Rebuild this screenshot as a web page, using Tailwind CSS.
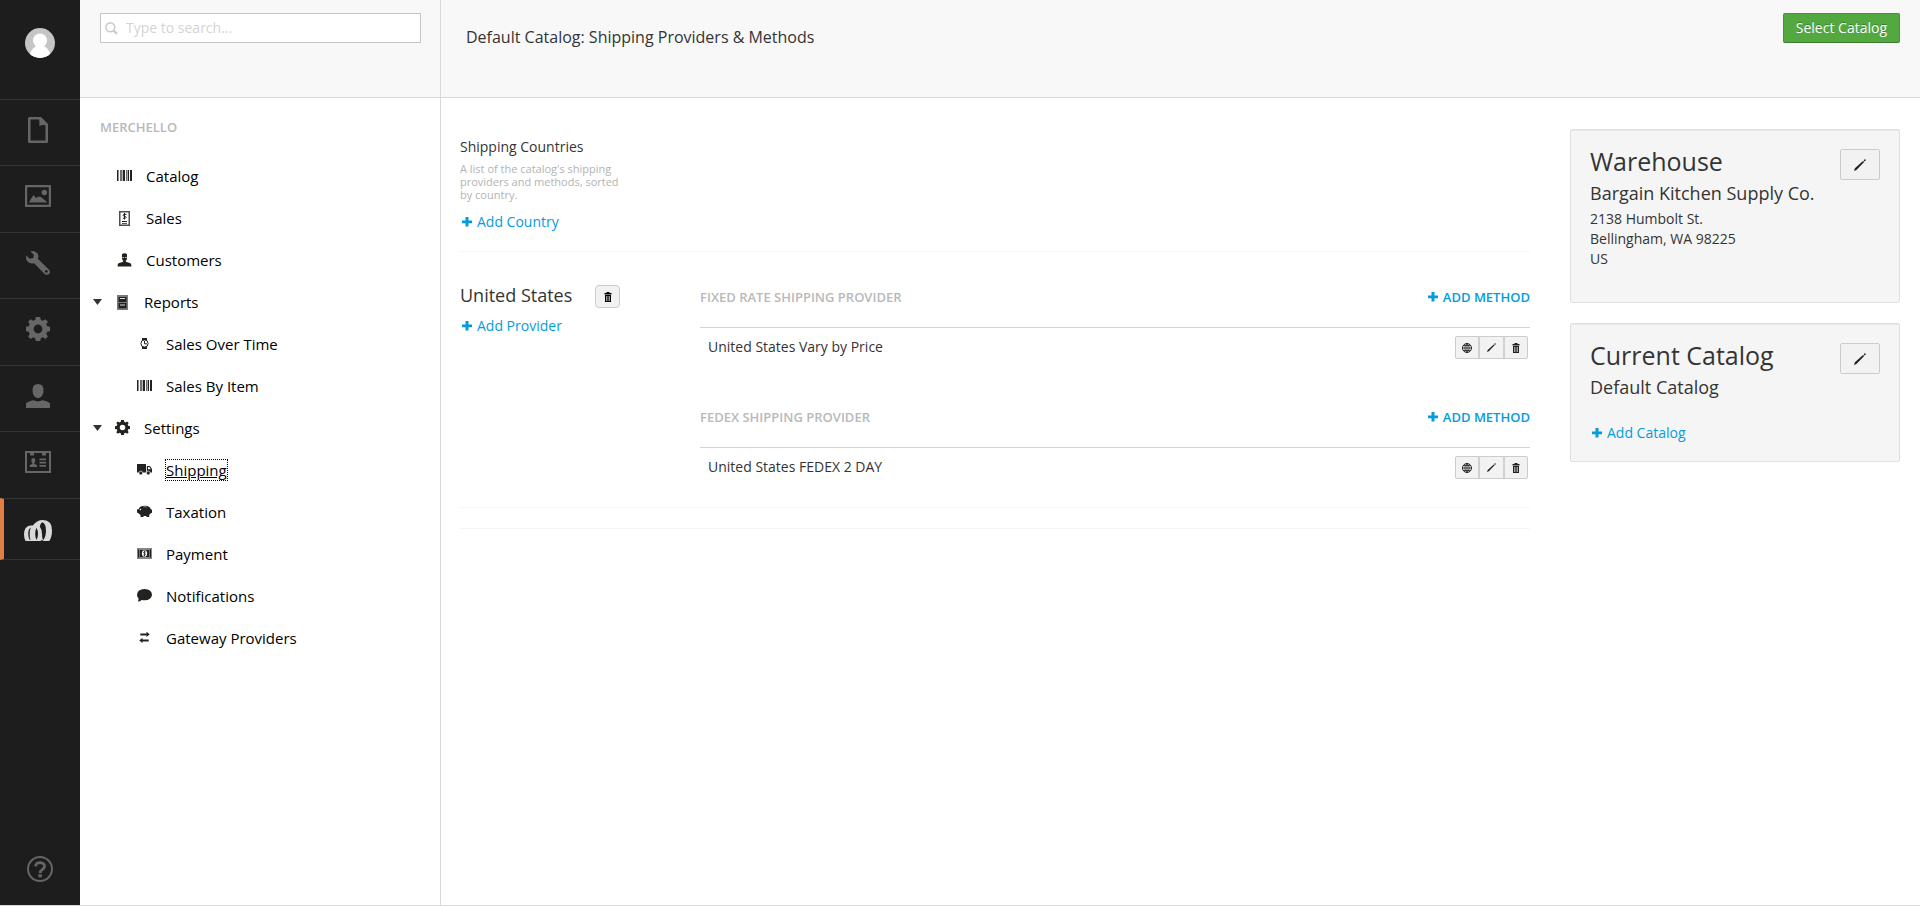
<!DOCTYPE html>
<html lang="en">
<head>
<meta charset="utf-8">
<title>Shipping Providers &amp; Methods</title>
<meta name="viewport" content="width=device-width, initial-scale=1">
<script src="https://cdn.jsdelivr.net/npm/@tailwindcss/browser@4"></script>
</head>
<body class="bg-white font-['Open_Sans',sans-serif] text-sm leading-5 text-[#343434]">

<!-- Shared icon symbols -->
<svg class="hidden" aria-hidden="true">
  <symbol id="plus" viewBox="0 0 10 11"><path d="M3.500 0h3v3.500H10v2.700H6.500V9.500h-3V6.200H0V3.500h3.500z"/></symbol>
  <symbol id="trash" viewBox="0 0 10 10"><path d="M3.5 1V0h3v1H8.500v1.500h-7V1z"/><path fill-rule="evenodd" d="M2 3h6v7H2zM3.300 4v5h.6V4zM4.700 4v5h.6V4zM6.100 4v5h.6V4z"/></symbol>
  <symbol id="pencil" viewBox="0 0 12 12"><path d="M0 12l.9-2.800L9 1.900l1.200 1.200L2.400 10.900zM9.600 1.300l.9-.9q.6-.2 1 .2t.2 1l-.9.900z"/></symbol>
  <symbol id="globe" viewBox="0 0 10 10"><circle cx="5" cy="5" r="4.500" fill="none" stroke="currentColor" stroke-width="1"/><path d="M5 .5v9M.5 5h9M1.400 2.500h7.200M1.400 7.500h7.200M5 .5q-4.500 4.500 0 9M5 .5q4.500 4.500 0 9" fill="none" stroke="currentColor" stroke-width=".8"/></symbol>
  <symbol id="barcode" viewBox="0 0 15 12"><path d="M0 0h1.500v11H0zM6 0h2v11H6zM11 0h1v11h-1zM13 0h2v11h-2z"/><path d="M3 0h2.500v11H3zM9 0h1.600v11H9z" opacity=".65"/></symbol>
  <symbol id="gear" viewBox="0 0 24 24"><path fill-rule="evenodd" d="M9.800 0h4.400l.6 2.900 2.100.9L19.400 2.200l2.500 2.500-1.600 2.500.8 2.100 2.900.5v4.400l-2.900.6-.8 2.100 1.600 2.500-2.500 2.500-2.500-1.600-2.100.9-.6 2.900H9.800l-.6-2.900-2.100-.9-2.500 1.600-2.500-2.500 1.600-2.500-.8-2.100L0 14.200V9.800l2.900-.5.8-2.100L2.100 4.700l2.500-2.500 2.500 1.600 2.100-.9zM12 7.600a4.400 4.400 0 1 0 0 8.800 4.400 4.400 0 0 0 0-8.800z"/></symbol>
</svg>

<div class="flex h-screen border-b border-[#d9d9d9]">

  <!-- Section bar -->
  <nav aria-label="Sections" class="flex w-20 shrink-0 flex-col bg-[#1d1d1d] text-[#666]">
    <a href="#" aria-label="Account" class="flex h-[99px] shrink-0 justify-center pt-7">
      <svg width="30" height="30" viewBox="0 0 30 30"><defs><clipPath id="face"><circle cx="15" cy="15" r="15"/></clipPath></defs><g clip-path="url(#face)"><rect width="30" height="30" fill="#c5c5c5"/><circle cx="15" cy="12.500" r="7" fill="#fff"/><path d="M4 27q4-8 7.500-9h7q4 1 7.500 9l-4 4H8z" fill="#fff"/></g></svg>
    </a>
    <ul class="flex shrink-0 flex-col">
      <li class="border-t border-[#343434] odd:h-[66px] even:h-[67px]"><a href="#" aria-label="Content" class="flex h-full items-center justify-center pr-1 pb-1.5">
        <svg width="20" height="26" viewBox="0 0 20 26" fill="currentColor"><path fill-rule="evenodd" d="M1.500 0H13l7 7v17.500Q20 26 18.500 26h-17Q0 26 0 24.500v-23Q0 0 1.500 0zM2.500 2.500v21h15V8.300q-3-.9-6.300.8.500-3.300 0-6.600z"/></svg></a></li>
      <li class="border-t border-[#343434] odd:h-[66px] even:h-[67px]"><a href="#" aria-label="Media" class="flex h-full items-center justify-center pr-1 pb-1.5">
        <svg width="26" height="22" viewBox="0 0 26 22" fill="currentColor"><path fill-rule="evenodd" d="M1 0h24q1 0 1 1v20q0 1-1 1H1q-1 0-1-1V1q0-1 1-1zM2.200 2.200v17.600h21.600V2.200z"/><circle cx="19.300" cy="7.500" r="2.700"/><path d="M4 17.500l2-3.800L8.500 10l2.500 3 2-1.200h2.500l3.500 2.700 3 2.500v.5z"/></svg></a></li>
      <li class="border-t border-[#343434] odd:h-[66px] even:h-[67px]"><a href="#" aria-label="Settings" class="flex h-full items-center justify-center pr-1 pb-1.5">
        <svg width="24" height="24" viewBox="0 0 24 24" fill="currentColor"><path fill-rule="evenodd" d="M4.500.3Q9-.8 11.500 2.600q1.500 2.600.3 5.200l10.800 10.400q2 2 1 4.200-2.200 2.600-5 .6L8.200 12.200Q4.400 13.200 1.800 10.800-.5 8.300.2 4.500l3.500 3.300 3.600-.7.600-3zM20.300 19a1.400 1.400 0 1 0 .01 0z"/></svg></a></li>
      <li class="border-t border-[#343434] odd:h-[66px] even:h-[67px]"><a href="#" aria-label="Developer" class="flex h-full items-center justify-center pr-1 pb-1.5">
        <svg width="24" height="24" fill="currentColor"><use href="#gear"/></svg></a></li>
      <li class="border-t border-[#343434] odd:h-[66px] even:h-[67px]"><a href="#" aria-label="Users" class="flex h-full items-center justify-center pr-1 pb-1.5">
        <svg width="24" height="24" viewBox="0 0 24 24" fill="currentColor"><path d="M12 0q5.500.2 5.500 6T14 13.600q-2 1-4 0Q6.500 11.800 6.500 6T12 0zM0 24v-4.500q.5-1.500 7.500-3.200 4.500 2.200 9 0 7 1.700 7.500 3.200V24z"/></svg></a></li>
      <li class="border-t border-[#343434] odd:h-[66px] even:h-[67px]"><a href="#" aria-label="Members" class="flex h-full items-center justify-center pr-1 pb-1.5">
        <svg width="26" height="22" viewBox="0 0 26 22" fill="currentColor"><path fill-rule="evenodd" d="M0 0h26v22H0zM2 2v18h22V2h-3v2.500h-4V2H9v2.500H5V2z"/><path d="M8.300 7q2 0 2 2.300t-1 2.700v.9l2.700 1V16H4.700v-2.100l2.600-1V12q-1-.6-1-2.700T8.300 7zM14.500 7.500H21v1.800h-6.500zM14.500 10.800H21v1.700h-6.500zM14.500 14H21v1.800h-6.500z"/></svg></a></li>
    </ul>
    <a href="#" aria-label="Merchello" aria-current="page" class="flex h-[62px] shrink-0 items-center justify-center border-y border-l-4 border-y-[#343434] border-l-[#e07f45] pt-0.5 pr-2 text-[#d9d9d9]">
      <svg width="28" height="21" viewBox="0 0 28 21" fill="currentColor"><path d="M1.500 21Q0 18 0 14.500 0 6.500 6 5.500q1.500-.2 2.800.1Q12.500 0 19 0q9 .3 9 10.500 0 6.500-2.700 10.500h-5.800q-.8-.3-1.500-1.500-.6 1-1.500 1.500z"/><path fill="#1d1d1d" d="M18.300 2.300Q22 3.500 22 10.500q0 6-2.600 9.500-1.600-1.800-1.400-6 0-4.500-2.200-7.500.7-3.400 2.500-4.200zM6.800 7.400Q4.200 9.300 4.200 13.500q0 4 1.600 6.500h.7q-1-2.700-.8-6 0-3.900 1.100-6.600zM12.500 7.800q1.500 2.600 1.500 6.200 0 3.500-1.500 6-1.300-2.500-1.300-6 0-3.600 1.300-6.200z"/></svg>
    </a>
    <a href="#" aria-label="Help" class="mt-auto flex justify-center pb-[23px]">
      <svg width="26" height="26" viewBox="0 0 26 26" fill="none" stroke="currentColor"><circle cx="13" cy="13" r="12" stroke-width="2"/><path d="M8.600 10.400Q8.800 6.600 13 6.600q4.600.2 4.500 3.600 0 1.800-2.300 3.400-2 1.400-2 3.400" stroke-width="2.800"/><path d="M11.300 18.300h3.600v3h-3.600z" fill="currentColor" stroke="none"/></svg>
    </a>
  </nav>

  <!-- Tree -->
  <div class="flex w-[361px] shrink-0 flex-col border-r border-[#d9d9d9]">
    <div class="h-[98px] border-b border-[#d9d9d9] bg-[#f8f8f8] px-5 pt-[13px]">
      <form role="search" class="mr-[-1px] flex h-[30px] items-center border border-[#c6c6c6] bg-white pl-1">
        <label for="search" class="mr-[7px] w-3.5 text-[#ccc]" aria-label="Search"><svg width="13" height="13" viewBox="0 0 13 13" fill="none" stroke="currentColor"><circle cx="5.300" cy="5.300" r="4.400" stroke-width="1.600"/><path d="M8.500 8.500l3.500 3.500" stroke-width="2.400"/></svg></label>
        <input id="search" type="search" placeholder="Type to search..." class="min-w-0 flex-1 bg-transparent text-sm outline-none placeholder:text-[#d4d4d4]">
      </form>
    </div>
    <nav aria-label="Merchello tree" class="pt-[19px] text-[15px] text-black">
      <h2 class="mb-[18px] pl-5 text-[13px] font-semibold text-[#b9b9b9]">MERCHELLO</h2>
      <ul class="fill-[#22221f]">
        <li class="flex h-[42px] items-center gap-3.5 pl-[37px]"><svg width="15" height="15" viewBox="0 0 15 15"><use href="#barcode" width="15" height="12" y="1"/></svg><a href="#">Catalog</a></li>
        <li class="flex h-[42px] items-center gap-3.5 pl-[37px]"><svg width="15" height="15" viewBox="0 0 15 15"><path fill-rule="evenodd" d="M2 0h11v15H2zM3.500 1.500v12h8v-12z" opacity=".8"/><path d="M9.400 3.500Q6 2.600 6 4.200q0 .8 1.500 1 1.700.3 1.600 1.300Q9 8 5.800 7.200M7.500 2v6.500" fill="none" stroke="#22221f"/><path d="M5 10h5v1H5zM5 12h5v.8H5z"/></svg><a href="#">Sales</a></li>
        <li class="flex h-[42px] items-center gap-3.5 pl-[37px]"><svg width="15" height="15" viewBox="0 0 15 15"><path d="M5 1q2.500-1.600 5 0v3.500q0 2.500-1.200 3.200v1l4.700 1.500q.8.500 1 3.300H.5q.2-2.800 1-3.300l4.700-1.500v-1Q5 7 5 4.500z"/><path d="M5.400 4h1.700v1H5.400zM8 4h1.700v1H8z" fill="#bbb"/></svg><a href="#">Customers</a></li>
        <li>
          <div class="flex h-[42px] items-center pl-[13px]"><button aria-label="Collapse Reports" aria-expanded="true" class="mr-[13px]"><svg width="9" height="6" viewBox="0 0 9 6" fill="#343434"><path d="M0 0h9L4.500 6z"/></svg></button><svg class="mr-3.5" width="15" height="15" viewBox="0 0 15 15"><path d="M2 0h11v15H2z" opacity=".6"/><path d="M3.500 2h8v5h-8zM3.500 8h8v5.200h-8z"/><path d="M5 3h5v1H5zM5 9.500h5v1H5z" fill="#ddd"/></svg><a href="#">Reports</a></div>
          <ul>
            <li class="flex h-[42px] items-center gap-3.5 pl-[57px]"><svg width="15" height="15" viewBox="0 0 15 15"><path d="M5 1h5v2.500H5zM5 9.500h5V12H5z"/><circle cx="7.500" cy="6.500" r="3.600" fill="#fff" stroke="#22221f" stroke-width="1"/><path d="M7.500 4v2.800H10" fill="none" stroke="#22221f"/></svg><a href="#">Sales Over Time</a></li>
            <li class="flex h-[42px] items-center gap-3.5 pl-[57px]"><svg width="15" height="15" viewBox="0 0 15 15"><use href="#barcode" width="15" height="12" y="1"/></svg><a href="#">Sales By Item</a></li>
          </ul>
        </li>
        <li>
          <div class="flex h-[42px] items-center pl-[13px]"><button aria-label="Collapse Settings" aria-expanded="true" class="mr-[13px]"><svg width="9" height="6" viewBox="0 0 9 6" fill="#343434"><path d="M0 0h9L4.500 6z"/></svg></button><svg class="mr-3.5" width="15" height="16" viewBox="0 0 15 16"><use href="#gear" width="15" height="15"/></svg><a href="#">Settings</a></div>
          <ul>
            <li class="flex h-[42px] items-center gap-3.5 pl-[57px]"><svg width="15" height="15" viewBox="0 0 15 15"><path d="M0 1h9v8.500H0z"/><path fill-rule="evenodd" d="M9.800 3H13l2 3v3.500H9.800zM11 4v2.300h2.700L12.500 4z"/><circle cx="3.800" cy="10" r="1.900" stroke="#fff" stroke-width=".6"/><circle cx="11.300" cy="10" r="1.900" stroke="#fff" stroke-width=".6"/></svg><a href="#" aria-current="page" class="underline outline outline-dotted outline-black">Shipping</a></li>
            <li class="flex h-[42px] items-center gap-3.5 pl-[57px]"><svg width="15" height="15" viewBox="0 0 15 15"><path d="M2 3.500Q3 .6 8 .7q5 0 5.800 3.500l1.200.5v3l-1.200.5-1.600 1.800V12H9.500v-1H6.500v1H3.500v-2L1.500 8.200 0 7.500v-3l1.500-.2z"/><path d="M6 1.700q2-.8 4 0v.6H6z" fill="#999"/><circle cx="3.400" cy="4.500" r=".7" fill="#fff"/></svg><a href="#">Taxation</a></li>
            <li class="flex h-[42px] items-center gap-3.5 pl-[57px]"><svg width="15" height="15" viewBox="0 0 15 15"><path d="M0 1h15v11H0z" opacity=".55"/><path d="M1 2.500h1.200v8H1zM3 3h9v7H3zM12.800 2.500H14v8h-1.200z"/><ellipse cx="7.500" cy="6.500" rx="2.600" ry="3.300" fill="#fff"/><path d="M8.800 5Q6.300 4.200 6.500 5.500q.1.700 1 .8 1.100.3.900 1.200-.3.900-2.100.4M7.500 3.600v5.800" fill="none" stroke="#22221f" stroke-width=".8"/></svg><a href="#">Payment</a></li>
            <li class="flex h-[42px] items-center gap-3.5 pl-[57px]"><svg width="15" height="15" viewBox="0 0 15 15"><path d="M7.500 0q7 .3 7.500 5.700-.5 5.400-7.500 5.600-1.500 0-2.800-.4Q3 12.500.8 12.500q.9-1.300.7-3.200Q0 8 0 5.700.5.300 7.500 0z"/></svg><a href="#">Notifications</a></li>
            <li class="flex h-[42px] items-center gap-3.5 pl-[57px]"><svg width="15" height="15" viewBox="0 0 15 15"><path d="M3.300 2.500h6.200V.7l3.200 2.600L9.500 6V4.400H3.300zM11.700 8.500H5.500V6.800L2.300 9.400 5.500 12v-1.600h6.200z"/></svg><a href="#">Gateway Providers</a></li>
          </ul>
        </li>
      </ul>
    </nav>
  </div>

  <!-- Editor -->
  <main class="min-w-0 flex-1">
    <header class="flex h-[98px] items-start justify-between border-b border-[#d9d9d9] bg-[#f8f8f8] pt-[13px] pr-5 pl-[25px]">
      <h1 class="pt-3.5 text-base leading-5">Default Catalog: Shipping Providers &amp; Methods</h1>
      <button class="h-[30px] rounded-xs border border-[#48933a] border-b-[#3c7a2e] bg-[#53a93f] px-3 text-white text-shadow-[0_-1px_0_rgb(0_0_0/0.25)]">Select Catalog</button>
    </header>

    <div class="flex gap-10 pt-[31px] pr-5 pl-[19px]">
      <div class="min-w-0 flex-1 pt-2">
        <section class="border-b border-[#f6f6f6] pb-[19px]">
          <div class="w-40">
            <h2>Shipping Countries</h2>
            <p class="mt-[5px] text-[11px] leading-[13px] text-[#b3b3b3]">A list of the catalog's shipping providers and methods, sorted by country.</p>
          </div>
          <a href="#" class="mt-[11px] ml-0.5 flex w-fit items-center gap-[5px] text-[#049cdb]"><svg width="10" height="11" fill="currentColor"><use href="#plus"/></svg>Add Country</a>
        </section>

        <section class="mt-[33px] flex gap-20 border-b border-[#f6f6f6] pb-7">
          <div class="w-40 shrink-0">
            <div class="flex h-[23px] items-start justify-between">
              <h2 class="text-[18px]">United States</h2>
              <button aria-label="Delete country" class="flex h-[23px] w-[25px] items-center justify-center rounded-sm border border-[#ccc] bg-[#f2f2f2] text-black"><svg width="10" height="10" fill="currentColor"><use href="#trash"/></svg></button>
            </div>
            <a href="#" class="mt-2 ml-0.5 flex w-fit items-center gap-[5px] text-[#049cdb]"><svg width="10" height="11" fill="currentColor"><use href="#plus"/></svg>Add Provider</a>
          </div>
          <div class="flex min-w-0 flex-1 flex-col gap-[46px]">
            <section>
              <div class="flex justify-between border-b border-[#d4d4d4] pt-0.5 pb-5 text-[13px] font-semibold">
                <h3 class="text-[#b9b9b9]">FIXED RATE SHIPPING PROVIDER</h3>
                <a href="#" class="flex items-center gap-[5px] text-[#049cdb]"><svg width="10" height="11" fill="currentColor"><use href="#plus"/></svg>ADD METHOD</a>
              </div>
              <div class="flex items-center justify-between pt-2 pr-0.5 pl-2">
                <p class="pb-0.5">United States Vary by Price</p>
                <div class="flex divide-x-2 divide-[#d0d0d0] overflow-hidden rounded-xs border border-[#ccc] bg-[#f2f2f2] text-[#222]">
                  <button aria-label="Regions" class="flex h-[21px] w-6 items-center justify-center"><svg width="10" height="10" fill="currentColor"><use href="#globe"/></svg></button>
                  <button aria-label="Edit method" class="flex h-[21px] w-[25px] items-center justify-center"><svg width="9" height="9" fill="currentColor"><use href="#pencil"/></svg></button>
                  <button aria-label="Delete method" class="flex h-[21px] w-[22px] items-center justify-center"><svg width="10" height="10" fill="currentColor"><use href="#trash"/></svg></button>
                </div>
              </div>
            </section>
            <section>
              <div class="flex justify-between border-b border-[#d4d4d4] pt-0.5 pb-5 text-[13px] font-semibold">
                <h3 class="text-[#b9b9b9]">FEDEX SHIPPING PROVIDER</h3>
                <a href="#" class="flex items-center gap-[5px] text-[#049cdb]"><svg width="10" height="11" fill="currentColor"><use href="#plus"/></svg>ADD METHOD</a>
              </div>
              <div class="flex items-center justify-between pt-2 pr-0.5 pl-2">
                <p class="pb-0.5">United States FEDEX 2 DAY</p>
                <div class="flex divide-x-2 divide-[#d0d0d0] overflow-hidden rounded-xs border border-[#ccc] bg-[#f2f2f2] text-[#222]">
                  <button aria-label="Regions" class="flex h-[21px] w-6 items-center justify-center"><svg width="10" height="10" fill="currentColor"><use href="#globe"/></svg></button>
                  <button aria-label="Edit method" class="flex h-[21px] w-[25px] items-center justify-center"><svg width="9" height="9" fill="currentColor"><use href="#pencil"/></svg></button>
                  <button aria-label="Delete method" class="flex h-[21px] w-[22px] items-center justify-center"><svg width="10" height="10" fill="currentColor"><use href="#trash"/></svg></button>
                </div>
              </div>
            </section>
          </div>
        </section>
        <hr class="mt-5 border-[#f6f6f6]">
      </div>

      <aside class="flex w-[330px] shrink-0 flex-col gap-5">
        <section class="flex items-start justify-between rounded-xs border border-[#e0e0e0] bg-[#f5f5f5] px-[19px] pt-[19px] pb-[33px] inset-shadow-xs">
          <div>
            <h2 class="text-[25px] leading-6">Warehouse</h2>
            <h3 class="mt-2 text-[18px] leading-6">Bargain Kitchen Supply Co.</h3>
            <address class="mt-1 not-italic">2138 Humbolt St.<br>Bellingham, WA 98225<br>US</address>
          </div>
          <button aria-label="Edit warehouse" class="flex h-[31px] w-10 items-center justify-center rounded-xs border border-[#ccc] bg-[#f2f2f2] text-[#222]"><svg width="12" height="12" fill="currentColor"><use href="#pencil"/></svg></button>
        </section>
        <section class="flex items-start justify-between rounded-xs border border-[#e0e0e0] bg-[#f5f5f5] px-[19px] pt-[19px] pb-[18px] inset-shadow-xs">
          <div>
            <h2 class="text-[25px] leading-6">Current Catalog</h2>
            <h3 class="mt-2 text-[18px] leading-6">Default Catalog</h3>
            <a href="#" class="mt-6 ml-0.5 flex w-fit items-center gap-[5px] text-[#049cdb]"><svg width="10" height="11" fill="currentColor"><use href="#plus"/></svg>Add Catalog</a>
          </div>
          <button aria-label="Edit catalog" class="flex h-[31px] w-10 items-center justify-center rounded-xs border border-[#ccc] bg-[#f2f2f2] text-[#222]"><svg width="12" height="12" fill="currentColor"><use href="#pencil"/></svg></button>
        </section>
      </aside>
    </div>
  </main>
</div>
</body>
</html>
